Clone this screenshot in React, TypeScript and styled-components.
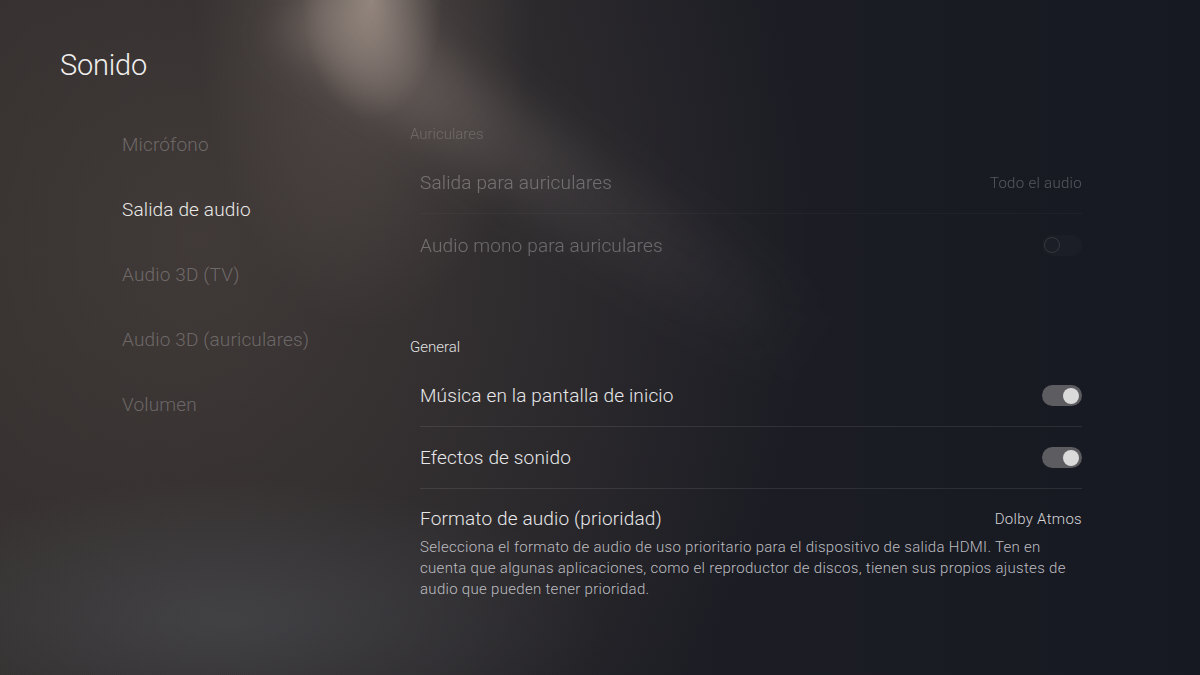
import styled, { createGlobalStyle } from 'styled-components'

const GlobalStyle = createGlobalStyle`
  html, body { margin: 0; padding: 0; background: #1a1b22; }
  * { box-sizing: border-box; }
`

const Screen = styled.div`
  position: relative;
  width: 1200px;
  height: 675px;
  overflow: hidden;
  font-family: Roboto, "Open Sans", sans-serif;
  font-weight: 300;
  background:
    radial-gradient(ellipse 70px 120px at 372px 0px, rgba(205, 188, 176, 0.5), transparent 100%),
    radial-gradient(ellipse 170px 330px at 365px 0px, rgba(150, 132, 122, 0.3), transparent 100%),
    radial-gradient(ellipse 380px 140px at 230px 620px, rgba(95, 102, 112, 0.33), transparent 100%),
    radial-gradient(ellipse 620px 700px at 200px 240px, rgba(72, 64, 61, 0.75), transparent 100%),
    linear-gradient(to right, #2c2929 0%, #242327 35%, #1c1d24 60%, #161922 100%);

  &::before {
    content: '';
    position: absolute;
    left: 300px;
    top: -35px;
    width: 620px;
    height: 80px;
    background: linear-gradient(to right, rgba(175, 158, 148, 0.34), rgba(130, 120, 118, 0.14) 55%, transparent);
    transform-origin: left center;
    transform: rotate(34deg);
    filter: blur(20px);
    pointer-events: none;
  }
`

const Content = styled.div`
  position: relative;
  display: flex;
  flex-direction: column;
  padding: 48px 0 0 60px;
`

const Title = styled.h1`
  margin: 0;
  font-size: 29px;
  line-height: 34px;
  font-weight: 300;
  color: #f0efee;
  letter-spacing: -0.2px;
`

const Body = styled.div`
  display: flex;
  margin-top: 30px;
`

const Nav = styled.nav`
  width: 350px;
  padding-left: 62px;
  display: flex;
  flex-direction: column;
`

const NavItem = styled.div<{ $active?: boolean }>`
  height: 65px;
  line-height: 65px;
  font-size: 19px;
  letter-spacing: 0.15px;
  color: ${(p) => (p.$active ? '#ebe9e7' : 'rgba(255, 255, 255, 0.26)')};
`

const Panel = styled.div`
  width: 672px;
  padding-top: 12px;
  display: flex;
  flex-direction: column;
`

const Section = styled.section<{ $dim?: boolean }>`
  display: flex;
  flex-direction: column;
  opacity: ${(p) => (p.$dim ? 0.32 : 1)};
  & + & { margin-top: 61px; }
`

const SectionTitle = styled.div<{ $dim?: boolean }>`
  font-size: 15px;
  line-height: 20px;
  letter-spacing: 0;
  color: ${(p) => (p.$dim ? 'rgba(255,255,255,0.55)' : '#e2e2e2')};
  margin-bottom: 8px;
`

const Row = styled.div`
  margin-left: 10px;
  height: 62px;
  display: flex;
  align-items: center;
  justify-content: space-between;
  border-bottom: 1px solid rgba(255, 255, 255, 0.09);

  &:last-child { border-bottom: none; }
`

const RowLabel = styled.span`
  font-size: 19px;
  letter-spacing: 0.15px;
  color: #e8e8ea;
`

const RowValue = styled.span`
  font-size: 15px;
  letter-spacing: 0.3px;
  color: #d4d4d6;
`

const InfoRow = styled.div`
  margin-left: 10px;
  padding-top: 17px;
  display: flex;
  flex-direction: column;
`

const InfoHead = styled.div`
  display: flex;
  align-items: center;
  justify-content: space-between;
  line-height: 26px;
`

const Description = styled.p`
  margin: 5px 0 0;
  width: 672px;
  font-size: 15px;
  line-height: 21px;
  letter-spacing: 0.3px;
  color: #bdbdc0;
`

const Toggle = styled.div<{ $on?: boolean }>`
  position: relative;
  width: 40px;
  height: 21px;
  border-radius: 11px;
  background: ${(p) => (p.$on ? '#5c5c61' : 'rgba(255,255,255,0.06)')};

  &::after {
    content: '';
    position: absolute;
    top: 2.5px;
    ${(p) => (p.$on ? 'right: 3px;' : 'left: 2px;')}
    width: 16px;
    height: 16px;
    border-radius: 50%;
    background: ${(p) => (p.$on ? '#dadada' : 'transparent')};
    border: ${(p) => (p.$on ? 'none' : '1.5px solid rgba(255,255,255,0.35)')};
    box-sizing: border-box;
  }
`

const navItems = ['Micrófono', 'Salida de audio', 'Audio 3D (TV)', 'Audio 3D (auriculares)', 'Volumen']

export default function App() {
  return (
    <>
      <GlobalStyle />
      <Screen>
        <Content>
          <Title>Sonido</Title>
          <Body>
            <Nav>
              {navItems.map((n) => (
                <NavItem key={n} $active={n === 'Salida de audio'}>{n}</NavItem>
              ))}
            </Nav>
            <Panel>
              <Section $dim>
                <SectionTitle $dim>Auriculares</SectionTitle>
                <Row>
                  <RowLabel>Salida para auriculares</RowLabel>
                  <RowValue>Todo el audio</RowValue>
                </Row>
                <Row>
                  <RowLabel>Audio mono para auriculares</RowLabel>
                  <Toggle />
                </Row>
              </Section>
              <Section>
                <SectionTitle>General</SectionTitle>
                <Row>
                  <RowLabel>Música en la pantalla de inicio</RowLabel>
                  <Toggle $on />
                </Row>
                <Row>
                  <RowLabel>Efectos de sonido</RowLabel>
                  <Toggle $on />
                </Row>
                <InfoRow>
                  <InfoHead>
                    <RowLabel>Formato de audio (prioridad)</RowLabel>
                    <RowValue>Dolby Atmos</RowValue>
                  </InfoHead>
                  <Description>
                    Selecciona el formato de audio de uso prioritario para el dispositivo de salida HDMI. Ten en
                    <br />
                    cuenta que algunas aplicaciones, como el reproductor de discos, tienen sus propios ajustes de
                    <br />
                    audio que pueden tener prioridad.
                  </Description>
                </InfoRow>
              </Section>
            </Panel>
          </Body>
        </Content>
      </Screen>
    </>
  )
}
